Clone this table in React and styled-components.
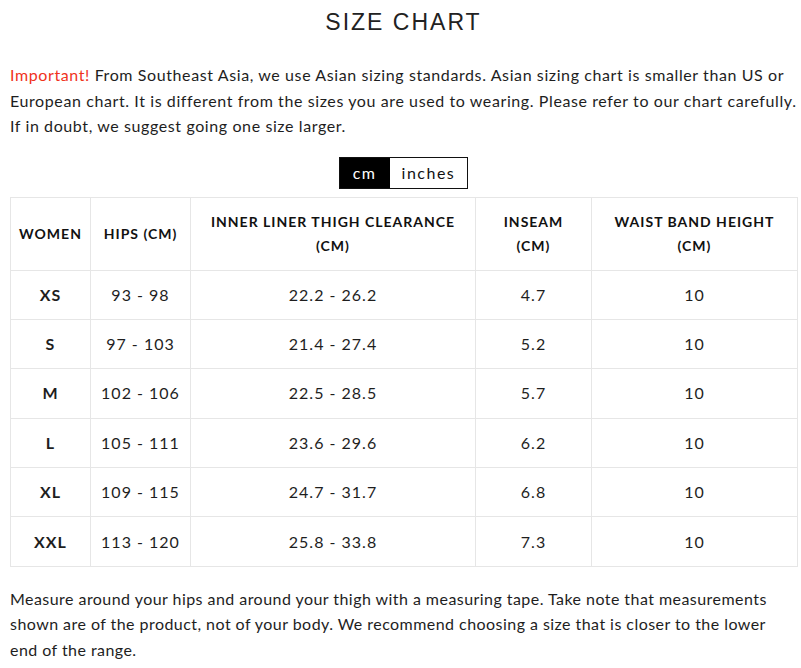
import styled, { createGlobalStyle } from "styled-components";

const GlobalStyle = createGlobalStyle`
  body {
    margin: 0;
    background: #fff;
    font-family: Lato, "Liberation Sans", sans-serif;
    color: #1e1e1e;
  }
`;

const Page = styled.div`
  padding: 0 4px 0 10px;
`;

const Title = styled.h2`
  margin: 0;
  padding-top: 9px;
  height: 30px;
  text-align: center;
  font-family: "Liberation Sans", sans-serif;
  font-weight: 400;
  font-size: 23px;
  letter-spacing: 2px;
  color: #222;
`;

const Text = styled.p`
  margin: ${(p) => p.$margin || "0"};
  font-size: 16px;
  line-height: 25.5px;
  letter-spacing: ${(p) => p.$ls || "0.6px"};
  white-space: nowrap;
`;

const Warn = styled.span`
  color: #f0321c;
`;

const ToggleRow = styled.div`
  display: flex;
  justify-content: center;
  margin: 18px 0 8px;
`;

const Toggle = styled.div`
  display: flex;
  border: 1px solid #111;
  height: 30px;
`;

const Unit = styled.button`
  border: 0;
  margin: 0;
  padding: 0 ${(p) => (p.$active ? "13px" : "12px")};
  background: ${(p) => (p.$active ? "#000" : "#fff")};
  color: ${(p) => (p.$active ? "#fff" : "#111")};
  font-family: inherit;
  font-size: 16px;
  letter-spacing: 1.5px;
  cursor: pointer;
`;

const Table = styled.table`
  width: 787px;
  table-layout: fixed;
  border-collapse: collapse;
  text-align: center;
`;

const Th = styled.th`
  box-sizing: border-box;
  border: 1px solid #e6e6e6;
  height: 73px;
  padding: 0 8px;
  font-size: 14px;
  font-weight: 700;
  line-height: 24px;
  letter-spacing: 1px;
  color: #111;
  width: ${(p) => p.$w};
`;

const Td = styled.td`
  border: 1px solid #e6e6e6;
  height: 48.4px;
  padding: 0;
  line-height: 20px;
  font-size: 16px;
  letter-spacing: 1px;
  font-weight: ${(p) => (p.$bold ? 700 : 400)};
`;

const heads = [
  [["WOMEN"], "80px"],
  [["HIPS (CM)"], "100px"],
  [["INNER LINER THIGH CLEARANCE", "(CM)"], "285px"],
  [["INSEAM", "(CM)"], "116px"],
  [["WAIST BAND HEIGHT", "(CM)"], "206px"],
];

const rows = [
  ["XS", "93 - 98", "22.2 - 26.2", "4.7", "10"],
  ["S", "97 - 103", "21.4 - 27.4", "5.2", "10"],
  ["M", "102 - 106", "22.5 - 28.5", "5.7", "10"],
  ["L", "105 - 111", "23.6 - 29.6", "6.2", "10"],
  ["XL", "109 - 115", "24.7 - 31.7", "6.8", "10"],
  ["XXL", "113 - 120", "25.8 - 33.8", "7.3", "10"],
];

export default function App() {
  return (
    <Page>
      <GlobalStyle />
      <Title>SIZE CHART</Title>
      <Text $margin="23px 0 0">
        <Warn>Important!</Warn> From Southeast Asia, we use Asian sizing standards. Asian sizing chart is smaller than US or
        <br />
        European chart. It is different from the sizes you are used to wearing. Please refer to our chart carefully.
        <br />
        If in doubt, we suggest going one size larger.
      </Text>
      <ToggleRow>
        <Toggle>
          <Unit $active>cm</Unit>
          <Unit>inches</Unit>
        </Toggle>
      </ToggleRow>
      <Table>
        <thead>
          <tr>
            {heads.map(([lines, w]) => (
              <Th key={lines[0]} $w={w}>
                {lines.map((l, i) => (
                  <span key={l}>
                    {i > 0 && <br />}
                    {l}
                  </span>
                ))}
              </Th>
            ))}
          </tr>
        </thead>
        <tbody>
          {rows.map((r) => (
            <tr key={r[0]}>
              {r.map((c, i) => (
                <Td key={i} $bold={i === 0}>{c}</Td>
              ))}
            </tr>
          ))}
        </tbody>
      </Table>
      <Text $margin="19px 0 0" $ls="0.45px">
        Measure around your hips and around your thigh with a measuring tape. Take note that measurements
        <br />
        shown are of the product, not of your body. We recommend choosing a size that is closer to the lower
        <br />
        end of the range.
      </Text>
    </Page>
  );
}
